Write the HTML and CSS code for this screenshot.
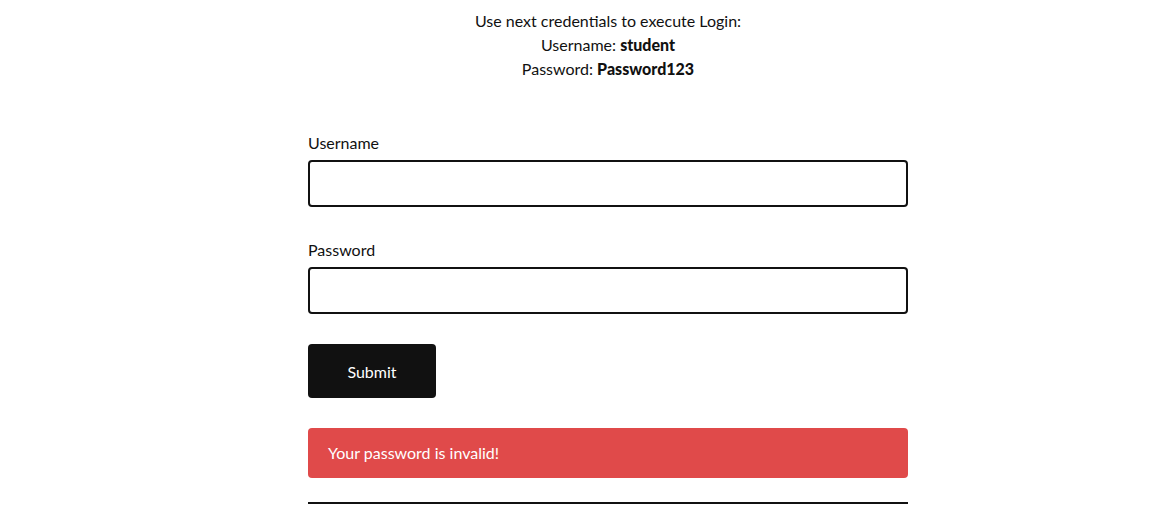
FILE: index.html
```html
<!DOCTYPE html>
<html>
<head>
<meta charset="utf-8">
<link rel="stylesheet" href="styles.css">
</head>
<body>
<div class="page">
  <div class="content">
    <div class="creds">
      <div>Use next credentials to execute Login:</div>
      <div>Username: <b>student</b></div>
      <div>Password: <b>Password123</b></div>
    </div>
    <form class="form">
      <label class="field">
        <span class="label">Username</span>
        <input class="input" type="text">
      </label>
      <label class="field">
        <span class="label">Password</span>
        <input class="input" type="password">
      </label>
      <button type="button" class="submit">Submit</button>
      <div class="error">Your password is invalid!</div>
      <div class="rule"></div>
    </form>
  </div>
</div>
</body>
</html>
```

FILE: styles.css
```css
html, body {
  margin: 0;
  padding: 0;
  background: #fff;
}
body {
  font-family: Lato, "Open Sans", sans-serif;
  font-size: 16px;
  line-height: 24px;
  color: #111;
  padding: 9px 8px 0 8px;
  overflow: hidden;
}
.page {
  padding-left: 47px;
}
.content {
  width: 600px;
  margin: 0 auto;
}
.creds {
  text-align: center;
}
.creds b {
  font-weight: 900;
}
.form {
  margin-top: 50px;
  display: flex;
  flex-direction: column;
}
.field {
  display: flex;
  flex-direction: column;
  gap: 5px;
  margin-bottom: 31px;
}
.label {
  display: block;
}
.input {
  box-sizing: border-box;
  width: 600px;
  height: 47px;
  border: 2px solid #111;
  border-radius: 4px;
  margin: 0;
  padding: 0 12px;
  font-family: inherit;
  font-size: 16px;
  outline: none;
}
.submit {
  align-self: flex-start;
  width: 128px;
  height: 54px;
  background: #111;
  color: #fff;
  border: none;
  border-radius: 4px;
  font-family: inherit;
  font-size: 16px;
  margin: -1px 0 0 0;
  padding: 0;
}
.error {
  margin-top: 30px;
  height: 50px;
  box-sizing: border-box;
  background: #e04a4a;
  color: #fff;
  border-radius: 4px;
  padding: 0 20px;
  display: flex;
  align-items: center;
}
.rule {
  margin-top: 24px;
  height: 2px;
  background: #111;
}
```
